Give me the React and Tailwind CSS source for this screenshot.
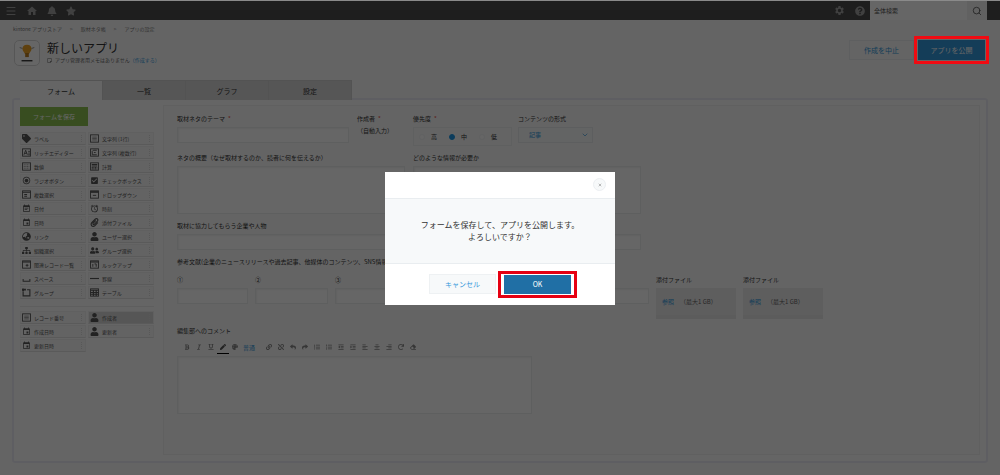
import {
  FaBell, FaBold, FaEraser, FaIndent, FaItalic, FaLink, FaListOl, FaListUl, FaOutdent,
  FaPaperclip, FaPen, FaRedo, FaReply, FaShare, FaSitemap, FaStar, FaTag, FaUnderline, FaUser,
  FaUserFriends, FaGlobeAsia, FaAlignCenter, FaAlignLeft, FaAlignRight, FaPalette, FaUnlink,
  FaQuestionCircle, FaRegStickyNote,
} from "react-icons/fa";
import { MdAlarm, MdCheckBox, MdEvent, MdEventNote, MdHome, MdRadioButtonChecked, MdSettings } from "react-icons/md";
import { ChevronDown, Menu, Search, X } from "lucide-react";

const Frame = ({ children }) => (
  <svg viewBox="0 0 16 16" fill="none" stroke="currentColor" strokeWidth={1.6}>
    <rect x="1" y="1.5" width="14" height="13" />
    {children}
  </svg>
);

const RichIcon = () => <Frame><path d="M3.5 12l3-8 3 8M4.5 9.5h4M11 6h3M11 9h3M11 12h3" /></Frame>;
const TextIcon = () => <Frame><path d="M4 5.5h8M4 8h8M4 10.5h8" strokeWidth={1} /></Frame>;
const MultiTextIcon = () => <Frame><path d="M12 4H6L4 6v6h8M7 8h3" /></Frame>;
const NumberIcon = () => <Frame><path d="M3 5h10M3 8h10M3 11h10" strokeWidth={1} strokeDasharray="2 1" /></Frame>;
const CalcIcon = () => <Frame><path d="M3 4.5h10M3 7h10" strokeWidth={2} /><path d="M3 10h10M3 12.500h10" strokeDasharray="2 1" strokeWidth={2} /></Frame>;
const MultiSelectIcon = () => <Frame><path d="M1 4h14M4 8h5M4 11h5" strokeWidth={2} /></Frame>;
const DropDownIcon = () => <Frame><path d="M1 3.5h14" strokeWidth={3} /><path d="M5 9.5h6" /></Frame>;
const RelatedIcon = () => <Frame><path d="M1 3.5h14" strokeWidth={2} /><path d="M9 7v5M6.5 9.5h5" /></Frame>;
const LookupIcon = () => <Frame><path d="M1 3.5h14" strokeWidth={2} /><path d="M5 7v5M8 7h3v5" /></Frame>;
const TableIcon = () => <Frame><path d="M1 4h14M1 8h14M1 11h14M6 4v10M11 4v10" strokeWidth={2} /></Frame>;
const SpaceIcon = () => (
  <svg viewBox="0 0 16 16" fill="none" stroke="currentColor" strokeWidth={1.8}><path d="M2 9v4h12V9" /></svg>
);
const LineIcon = () => (
  <svg viewBox="0 0 16 16" fill="none" stroke="currentColor" strokeWidth={2}><path d="M0 8h16" /></svg>
);
const GroupIcon = () => (
  <svg viewBox="0 0 16 16" fill="none" stroke="currentColor" strokeWidth={2}>
    <path d="M9 3h5v11H2V7" /><path d="M0 3h7M2 1v5" strokeWidth={3} />
  </svg>
);

const fields = [
  { label: "ラベル", icon: FaTag },
  { label: "文字列 (1行)", icon: TextIcon },
  { label: "リッチエディター", icon: RichIcon },
  { label: "文字列 (複数行)", icon: MultiTextIcon },
  { label: "数値", icon: NumberIcon },
  { label: "計算", icon: CalcIcon },
  { label: "ラジオボタン", icon: MdRadioButtonChecked },
  { label: "チェックボックス", icon: MdCheckBox },
  { label: "複数選択", icon: MultiSelectIcon },
  { label: "ドロップダウン", icon: DropDownIcon },
  { label: "日付", icon: MdEventNote },
  { label: "時刻", icon: MdAlarm },
  { label: "日時", icon: MdEvent },
  { label: "添付ファイル", icon: FaPaperclip },
  { label: "リンク", icon: FaGlobeAsia },
  { label: "ユーザー選択", icon: FaUser },
  { label: "組織選択", icon: FaSitemap },
  { label: "グループ選択", icon: FaUserFriends },
  { label: "関連レコード一覧", icon: RelatedIcon },
  { label: "ルックアップ", icon: LookupIcon },
  { label: "スペース", icon: SpaceIcon },
  { label: "罫線", icon: LineIcon },
  { label: "グループ", icon: GroupIcon },
  { label: "テーブル", icon: TableIcon },
];

const systemFields = [
  { label: "レコード番号", icon: TextIcon },
  { label: "作成者", icon: FaUser, used: true },
  { label: "作成日時", icon: MdEvent },
  { label: "更新者", icon: FaUser },
  { label: "更新日時", icon: MdEvent },
];

const fontTools = [
  { name: "太字", icon: FaBold },
  { name: "斜体", icon: FaItalic },
  { name: "下線", icon: FaUnderline },
  { name: "文字色", icon: FaPen, active: true },
  { name: "背景色", icon: FaPalette },
];

const blockTools = [
  { name: "リンク", icon: FaLink },
  { name: "リンク解除", icon: FaUnlink },
  { name: "元に戻す", icon: FaReply },
  { name: "やり直し", icon: FaShare },
  { name: "番号付きリスト", icon: FaListOl },
  { name: "箇条書き", icon: FaListUl },
  { name: "インデント解除", icon: FaOutdent },
  { name: "インデント", icon: FaIndent },
  { name: "左揃え", icon: FaAlignLeft },
  { name: "中央揃え", icon: FaAlignCenter },
  { name: "右揃え", icon: FaAlignRight },
  { name: "再適用", icon: FaRedo },
  { name: "書式クリア", icon: FaEraser },
];

const tabs = ["フォーム", "一覧", "グラフ", "設定"];

const box = "block border border-[#eaedee] bg-white shadow-[inset_1px_1px_2px_#f3f3f3]";

function Palette({ items }) {
  return (
    <div className="grid grid-cols-2 gap-x-[2px] gap-y-px">
      {items.map((f) => (
        <button key={f.label} type="button"
          className={`flex h-[13px] items-center gap-[3px] border border-[#efefef] border-b-[#e2e2e2] pl-px pr-[3px] text-[5px] leading-2 text-[#555] ${f.used ? "bg-[#d6d6d6]" : "bg-[#f7f7f7]"}`}>
          <span className="flex size-[9px] shrink-0 items-center justify-center text-[#555] *:size-[9px]"><f.icon /></span>
          <span className="flex-1 whitespace-nowrap text-left">{f.label}</span>
          <span className="h-[7px] border-l border-dotted border-[#dcdcdc]" />
        </button>
      ))}
    </div>
  );
}

function Field({ id, label, required, className = "", children }) {
  return (
    <div className={`flex flex-col gap-1 ${className}`}>
      <label htmlFor={id} className="whitespace-nowrap">
        {label}{required && <span className="ml-[3px] text-[#e74c3c]">*</span>}
      </label>
      {children}
    </div>
  );
}

function Tool({ tool }) {
  return (
    <button type="button" aria-label={tool.name}
      className={`flex h-3 w-3 items-center justify-center border-b ${tool.active ? "border-black text-[#555]" : "border-transparent"}`}>
      <tool.icon className="size-[6px]" />
    </button>
  );
}

function Header() {
  return (
    <header className="flex h-[19px] items-center bg-[#4b4b4b] pl-[5px] text-[#a0a0a0]">
      <nav className="flex items-center gap-[9px]">
        <button type="button" aria-label="メニュー"><Menu className="size-[12px]" /></button>
        <a href="#home" aria-label="ホーム"><MdHome className="size-[12px]" /></a>
        <a href="#notice" aria-label="通知"><FaBell className="size-[10px]" /></a>
        <a href="#favorite" aria-label="お気に入り"><FaStar className="size-[10px]" /></a>
      </nav>
      <div className="ml-auto flex items-center gap-[10px] pr-[5px]">
        <button type="button" aria-label="設定"><MdSettings className="size-[11px]" /></button>
        <button type="button" aria-label="ヘルプ"><FaQuestionCircle className="size-[10px]" /></button>
      </div>
      <form className="mr-[13px] flex h-full bg-white">
        <input type="search" aria-label="全体検索" placeholder="全体検索"
          className="w-[97px] pl-1 text-[6px] placeholder:text-[#555]" />
        <button type="button" aria-label="検索" className="flex w-5 items-center justify-center bg-[#f2f2f2] text-[#555]">
          <Search className="size-[10px]" />
        </button>
      </form>
    </header>
  );
}

function AppTitle() {
  return (
    <div className="mt-[7px] flex items-start px-[14px]">
      <div className="flex size-[26px] items-center justify-center rounded-[5px] border border-[#d8d8d8] bg-white">
        <svg viewBox="0 0 20 22" className="size-5">
          <path d="M2 5l3 1M18 5l-3 1" stroke="#888" strokeWidth="1" />
          <path d="M10 2c-3.5 0-5 2-5 4.500 0 2.300 2 3.200 2.800 5.500h4.400c.8-2.300 2.800-3.200 2.800-5.500C15 4 13.500 2 10 2z" fill="#eda226" />
          <path d="M8 11h4v4.500H8z" fill="#b87a20" />
          <path d="M4 19.500h12" stroke="#333" strokeWidth="1.500" />
        </svg>
      </div>
      <div className="ml-[7px]">
        <h1 className="text-[12px] leading-4 text-[#333]">新しいアプリ</h1>
        <p className="flex items-center gap-[3px] text-[5px] leading-2 text-[#666]">
          <FaRegStickyNote className="size-[5px]" />
          <span>アプリ管理者用メモはありません<a href="#memo" className="text-[#3498db]">（作成する）</a></span>
        </p>
      </div>
      <div className="ml-auto flex items-center gap-[4px] text-[7px] leading-2">
        <button type="button" className="h-5 w-[65px] border border-[#ebeeef] bg-[#f9fafa] text-[#3498db]">作成を中止</button>
        <div className="relative mr-px">
          <button type="button" className="block h-5 w-[67px] bg-[#3498db] text-white">アプリを公開</button>
          <span className="absolute -inset-1 z-20 border-[3px] border-[#f00b12]" />
        </div>
      </div>
    </div>
  );
}

function FormCanvas() {
  return (
    <div className="flex flex-1 flex-col gap-2 border border-[#f1f1f1] bg-[#fafafa] pt-[9px] pb-10 pl-[13px] text-[6px] leading-2 text-[#333]">
      <div className="flex">
        <Field id="theme" label="取材ネタのテーマ" required className="w-[180px]">
          <input id="theme" className={`${box} h-4 w-[172px]`} />
        </Field>
        <div className="flex w-14 flex-col gap-1">
          <span>作成者<span className="ml-[3px] text-[#e74c3c]">*</span></span>
          <span className="whitespace-nowrap">（自動入力）</span>
        </div>
        <fieldset className="w-[105px]">
          <legend className="mb-1">優先度<span className="ml-[3px] text-[#e74c3c]">*</span></legend>
          <div className="flex h-[19px] w-[99px] items-center gap-3 border border-[#eef0f1] pl-[5px]">
            {["高", "中", "低"].map((v) => (
              <label key={v} className="flex items-center gap-[6px]">
                <input type="radio" name="priority" defaultChecked={v === "中"}
                  className="size-[6px] appearance-none rounded-full border border-[#f1f3f4] bg-white checked:border-[#1f97e5] checked:bg-[#1f97e5]" />
                {v}
              </label>
            ))}
          </div>
        </fieldset>
        <Field id="format" label="コンテンツの形式">
          <div className="relative">
            <select id="format" className="block h-4 w-[75px] appearance-none border border-[#e8ebed] bg-[#f7f9fa] pl-[10px] text-[#3498db]">
              <option>記事</option>
            </select>
            <ChevronDown className="absolute top-1 right-1 size-2 text-[#3498db]" />
          </div>
        </Field>
      </div>

      <div className="flex gap-2">
        <Field id="summary" label="ネタの概要（なぜ取材するのか、読者に何を伝えるか）">
          <textarea id="summary" className={`${box} h-12 w-[228px] resize-none`} />
        </Field>
        <Field id="info" label="どのような情報が必要か">
          <textarea id="info" className={`${box} h-12 w-[228px] resize-none`} />
        </Field>
      </div>

      <Field id="people" label="取材に協力してもらう企業や人物">
        <input id="people" className={`${box} h-4 w-[464px]`} />
      </Field>

      <div className="flex flex-col gap-[10px]">
        <p>参考文献(企業のニュースリリースや過去記事、他媒体のコンテンツ、SNS情報など)</p>
        <div className="flex gap-[7px]">
          <Field id="ref1" label="①"><input id="ref1" className={`${box} h-4 w-[71px]`} /></Field>
          <Field id="ref2" label="②"><input id="ref2" className={`${box} h-4 w-[73px]`} /></Field>
          <Field id="ref3" label="③"><input id="ref3" className={`${box} h-4 w-[314px]`} /></Field>
          {["file1", "file2"].map((id) => (
            <div key={id} className="flex flex-col gap-1">
              <span>添付ファイル</span>
              <div className="flex h-[31px] w-20 items-center gap-[6px] border-b-4 border-[#e6e6e6] bg-[#ebebeb] pl-[6px]">
                <button type="button" className="text-[#3498db]">参照</button>
                <span className="whitespace-nowrap text-[#666]">（最大1 GB）</span>
              </div>
            </div>
          ))}
        </div>
      </div>

      <Field id="comment" label="編集部へのコメント">
        <div>
          <div className="flex h-[17px] items-center pl-1 text-[#888]">
            {fontTools.map((t) => <Tool key={t.name} tool={t} />)}
            <button type="button" className="mr-[6px] w-4 text-[#3498db]">普通</button>
            {blockTools.map((t) => <Tool key={t.name} tool={t} />)}
          </div>
          <textarea id="comment" className={`${box} h-[58px] w-[355px] resize-none`} />
        </div>
      </Field>
    </div>
  );
}

function PublishDialog() {
  return (
    <div role="dialog" aria-modal="true" className="w-[230px] bg-white text-[#333]">
      <div className="flex h-[26px] items-center justify-end pr-[9px]">
        <button type="button" aria-label="閉じる"
          className="flex size-[13px] items-center justify-center rounded-full border border-[#eceff2] bg-[#f7f9fa] text-[#999]">
          <X className="size-1" strokeWidth={4} />
        </button>
      </div>
      <p className="border-y border-[#e9edf0] bg-[#f7f9fa] py-5 text-center text-[8px] leading-3">
        フォームを保存して、アプリを公開します。<br />よろしいですか？
      </p>
      <div className="flex h-[41px] items-center justify-center gap-2 text-[7px] leading-2">
        <button type="button" className="h-5 w-[67px] border border-[#eef1f3] bg-[#f7f9fa] text-[#3498db]">キャンセル</button>
        <div className="relative">
          <button type="button" className="block h-[19px] w-[67px] bg-[#206fa5] text-white">OK</button>
          <span className="pointer-events-none absolute -inset-x-[6px] -inset-y-1 border-[3px] border-[#e60012]" />
        </div>
      </div>
    </div>
  );
}

export default function App() {
  return (
    <div className="min-h-screen bg-[#fbfbfb] pt-px font-['Noto_Sans_CJK_JP',sans-serif]">
      <Header />
      <nav className="flex gap-2 px-[13px] pt-[5px] text-[5px] leading-2 text-[#777]">
        <a href="#store">kintone アプリストア</a><span>&gt;</span>
        <a href="#app">取材ネタ帳</a><span>&gt;</span>
        <a href="#settings">アプリの設定</a>
      </nav>
      <AppTitle />

      <main className="mt-[14px] px-3">
        <div role="tablist" className="relative -mb-0.5 flex pl-2 text-[7px] leading-2">
          {tabs.map((t, i) => (
            <button key={t} type="button" role="tab" aria-selected={i === 0}
              className={`h-5 w-[83px] border-t border-r border-[#d0d0d0] text-[#333] ${i === 0 ? "bg-[#fdfdfd]" : "bg-[#d8d8d8]"}`}>
              {t}
            </button>
          ))}
        </div>
        <div className="flex rounded-[3px] border-2 border-[#ececf4] bg-[#fdfdfd] pt-[5px] pr-[6px] pb-[6px]">
          <aside className="w-[149px] shrink-0 pt-0.5 pr-[9px] pl-[6px]">
            <button type="button" className="block h-[19px] w-[68px] bg-[#8cc152] text-[6px] leading-2 text-white">フォームを保存</button>
            <div className="mt-[6px] border-b border-[#ebebeb] pb-[7px]"><Palette items={fields} /></div>
            <div className="mt-1"><Palette items={systemFields} /></div>
          </aside>
          <FormCanvas />
        </div>
      </main>

      <div className="fixed inset-0 z-10 flex items-center justify-center border-t border-[#8a8a8a] bg-black/60">
        <PublishDialog />
      </div>
    </div>
  );
}
